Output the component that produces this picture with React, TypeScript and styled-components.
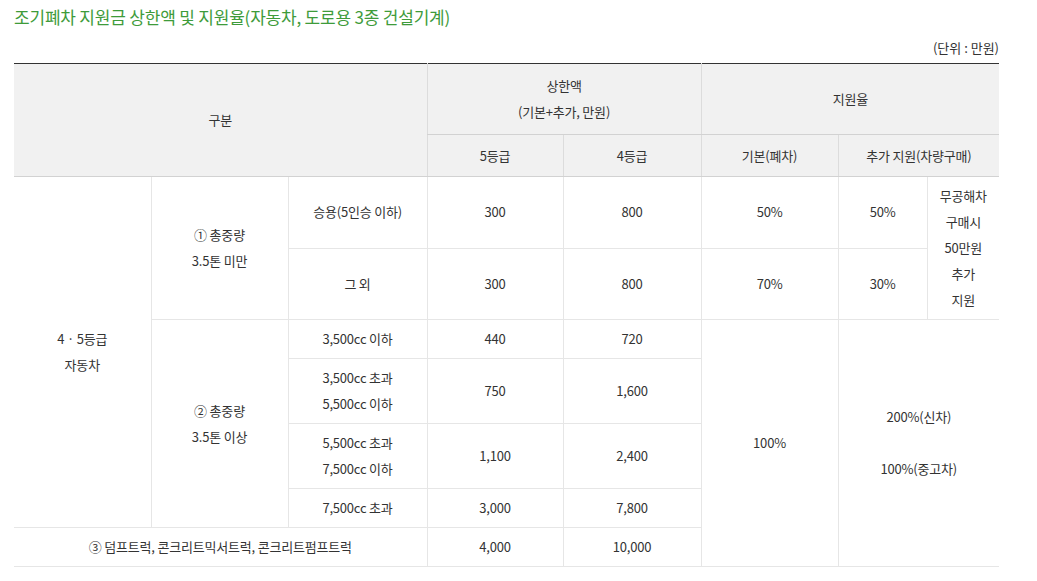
import styled, { createGlobalStyle } from 'styled-components';

const GlobalStyle = createGlobalStyle`
  body {
    margin: 0;
    background: #fff;
    font-family: 'Noto Sans CJK KR', 'Noto Sans', sans-serif;
    color: #333;
  }
`;

const Page = styled.div`
  width: 985px;
  padding: 5px 38px 0 14px;
`;

const Title = styled.h2`
  margin: 0;
  font-size: 17px;
  font-weight: 400;
  line-height: 24px;
  letter-spacing: -0.2px;
  color: #3e9b3a;
`;

const Unit = styled.p`
  margin: 6px 0 2px;
  font-size: 13px;
  line-height: 26px;
  text-align: right;
  letter-spacing: 0;
`;

const Table = styled.table`
  width: 985px;
  border-collapse: collapse;
  table-layout: fixed;
  border-top: 1px solid #333;
  border-bottom: 1px solid #c8c8c8;
  font-size: 13px;
  line-height: 26px;
  letter-spacing: -0.2px;
  text-align: center;
`;

const HeadRow = styled.tr<{ $height: number }>`
  height: ${p => p.$height}px;
`;

const Head = styled.th<{ $first?: boolean }>`
  padding: 0;
  font-weight: 400;
  background: #f1f1f1;
  border-left: ${p => (p.$first ? 'none' : '1px solid #dcdcdc')};
  border-bottom: 1px solid #d2d2d2;
  vertical-align: middle;
`;

const Cell = styled.td<{ $first?: boolean }>`
  padding: 6px 0;
  border-left: ${p => (p.$first ? 'none' : '1px solid #e6e6e6')};
  border-bottom: 1px solid #e6e6e6;
  vertical-align: middle;
`;

const widths = [137, 137, 139, 136, 138, 137, 89, 72];

const App = () => {
  return (
    <Page>
      <GlobalStyle />
      <Title>조기폐차 지원금 상한액 및 지원율(자동차, 도로용 3종 건설기계)</Title>
      <Unit>(단위 : 만원)</Unit>
      <Table>
        <colgroup>
          {widths.map((w, i) => (
            <col key={i} style={{ width: w }} />
          ))}
        </colgroup>
        <thead>
          <HeadRow $height={71}>
            <Head $first colSpan={3} rowSpan={2}>
              구분
            </Head>
            <Head colSpan={2}>
              상한액
              <br />
              (기본+추가, 만원)
            </Head>
            <Head colSpan={3}>지원율</Head>
          </HeadRow>
          <HeadRow $height={42}>
            <Head>5등급</Head>
            <Head>4등급</Head>
            <Head>기본(폐차)</Head>
            <Head colSpan={2}>추가 지원(차량구매)</Head>
          </HeadRow>
        </thead>
        <tbody>
          <tr>
            <Cell $first rowSpan={6}>
              4 · 5등급
              <br />
              자동차
            </Cell>
            <Cell rowSpan={2}>
              ① 총중량
              <br />
              3.5톤 미만
            </Cell>
            <Cell>승용(5인승 이하)</Cell>
            <Cell>300</Cell>
            <Cell>800</Cell>
            <Cell>50%</Cell>
            <Cell>50%</Cell>
            <Cell rowSpan={2}>
              무공해차
              <br />
              구매시
              <br />
              50만원
              <br />
              추가
              <br />
              지원
            </Cell>
          </tr>
          <tr>
            <Cell>그 외</Cell>
            <Cell>300</Cell>
            <Cell>800</Cell>
            <Cell>70%</Cell>
            <Cell>30%</Cell>
          </tr>
          <tr>
            <Cell rowSpan={4}>
              ② 총중량
              <br />
              3.5톤 이상
            </Cell>
            <Cell>3,500cc 이하</Cell>
            <Cell>440</Cell>
            <Cell>720</Cell>
            <Cell rowSpan={5}>100%</Cell>
            <Cell colSpan={2} rowSpan={5}>
              200%(신차)
              <br />
              <br />
              100%(중고차)
            </Cell>
          </tr>
          <tr>
            <Cell>
              3,500cc 초과
              <br />
              5,500cc 이하
            </Cell>
            <Cell>750</Cell>
            <Cell>1,600</Cell>
          </tr>
          <tr>
            <Cell>
              5,500cc 초과
              <br />
              7,500cc 이하
            </Cell>
            <Cell>1,100</Cell>
            <Cell>2,400</Cell>
          </tr>
          <tr>
            <Cell>7,500cc 초과</Cell>
            <Cell>3,000</Cell>
            <Cell>7,800</Cell>
          </tr>
          <tr>
            <Cell $first colSpan={3}>
              ③ 덤프트럭, 콘크리트믹서트럭, 콘크리트펌프트럭
            </Cell>
            <Cell>4,000</Cell>
            <Cell>10,000</Cell>
          </tr>
        </tbody>
      </Table>
    </Page>
  );
};

export default App;
